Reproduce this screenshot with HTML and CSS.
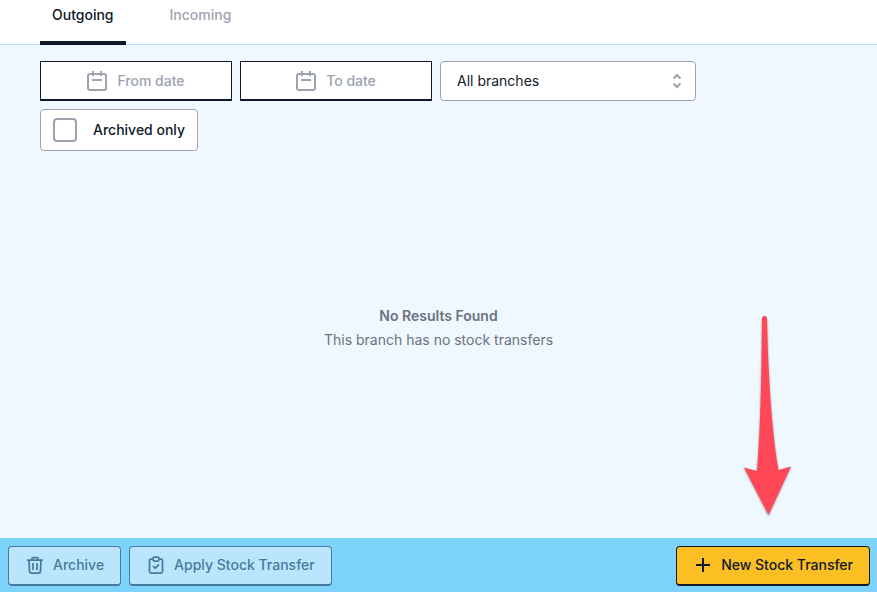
FILE: index.html
```
<!doctype html>
<html lang="en">
<head>
    <meta charset="UTF-8">
    <meta name="viewport" content="width=device-width, initial-scale=1.0">
    <title>Stock Transfers</title>
    <link rel="stylesheet" href="styles.css">
</head>
<body>
    <nav class="tabs">
        <a href="#" class="tab active">Outgoing</a>
        <a href="#" class="tab">Incoming</a>
    </nav>
    <main class="content">
        <form class="filters">
            <button type="button" class="date">
                <svg width="20" height="20" viewBox="0 0 20 20">
                    <rect x="1" y="3" width="18" height="16" rx="2"/>
                    <path d="M6 0v5M14 0v5M5 9h10"/>
                </svg>
                From date
            </button>
            <button type="button" class="date">
                <svg width="20" height="20" viewBox="0 0 20 20">
                    <rect x="1" y="3" width="18" height="16" rx="2"/>
                    <path d="M6 0v5M14 0v5M5 9h10"/>
                </svg>
                To date
            </button>
            <div class="branch">
                <select aria-label="Branch">
                    <option>All branches</option>
                </select>
                <svg width="10" height="16" viewBox="0 0 10 16">
                    <path d="M1.500 5.500L5 2l3.500 3.500M1.500 10.500L5 14l3.500-3.500"/>
                </svg>
            </div>
            <label class="archived">
                <input type="checkbox">
                Archived only
            </label>
        </form>
        <div class="empty">
            <h2>No Results Found</h2>
            <p>This branch has no stock transfers</p>
        </div>
    </main>
    <footer class="actions">
        <button type="button" class="btn" disabled>
            <svg width="20" height="20" viewBox="0 0 20 20">
                <path d="M2 5h16M7 5V3.500a1 1 0 0 1 1-1h4a1 1 0 0 1 1 1V5M4 5l.5 11a2 2 0 0 0 2 2h7a2 2 0 0 0 2-2L16 5M8 8v7M12 8v7"/>
            </svg>
            Archive
        </button>
        <button type="button" class="btn" disabled>
            <svg width="20" height="20" viewBox="0 0 20 20">
                <path d="M7 4H5a1.500 1.500 0 0 0-1.500 1.500v11A1.500 1.500 0 0 0 5 18h10a1.500 1.500 0 0 0 1.500-1.500v-11A1.500 1.500 0 0 0 15 4h-2"/>
                <rect x="7" y="2" width="6" height="4" rx="1.500"/>
                <path d="M7 11l2.200 2.200L13 9.500"/>
            </svg>
            Apply Stock Transfer
        </button>
        <button type="button" class="btn primary">
            <svg width="20" height="20" viewBox="0 0 20 20">
                <path d="M10 3v14M3 10h14"/>
            </svg>
            New Stock Transfer
        </button>
    </footer>
    <!-- arrow pointing at the new transfer button -->
    <svg class="arrow" width="56" height="208" viewBox="0 0 56 208">
        <path d="M22 6Q24.500 1.500 27 6C28 55 31 115 38.500 158L51 154.500 28.500 203 4 155.500 17 159C21 110 21.500 55 22 6Z"/>
    </svg>
</body>
</html>
```

FILE: styles.css
```
*{
    box-sizing: border-box;
    margin: 0;
    padding: 0;
}
body{
    display: flex;
    flex-direction: column;
    position: relative;
    min-height: 100vh;
    background: #f0f8ff;
    color: #111827;
    font: 14px/24px Inter, "Liberation Sans", sans-serif;
}
button, select{
    font: inherit;
    color: inherit;
}
svg{
    flex: none;
    fill: none;
    stroke: currentColor;
    stroke-width: 2;
}

/* tabs */
.tabs{
    display: flex;
    gap: 32px;
    padding: 0 40px;
    background: #ffffff;
    border-bottom: 1px solid #bfdbfe;
}
.tab{
    margin-bottom: -1px;
    padding: 3px 12px 14px;
    border-bottom: 4px solid transparent;
    color: #9ca3af;
    font-weight: 500;
    text-decoration: none;
}
.tab.active{
    border-color: #111827;
    color: #111827;
}

/* filters */
.content{
    flex: 1;
    display: flex;
    flex-direction: column;
}
.filters{
    display: flex;
    flex-wrap: wrap;
    gap: 8px;
    padding: 16px 40px;
}
.date{
    display: flex;
    align-items: center;
    justify-content: center;
    gap: 10px;
    width: 192px;
    height: 40px;
    background: #ffffff;
    border: 1px solid #111827;
    border-bottom-width: 2px;
    color: #9ca3af;
    font-weight: 500;
}
.branch{
    position: relative;
    width: 256px;
}
.branch select{
    appearance: none;
    width: 100%;
    height: 40px;
    padding: 0 16px;
    background: #ffffff;
    border: 1px solid #9ca3af;
    border-radius: 4px;
}
.branch svg{
    position: absolute;
    top: 12px;
    right: 14px;
    color: #9ca3af;
    pointer-events: none;
}
.archived{
    display: flex;
    align-items: center;
    gap: 16px;
    height: 42px;
    padding: 0 12px;
    background: #ffffff;
    border: 1px solid #9ca3af;
    border-radius: 4px;
    font-weight: 500;
}
.archived input{
    appearance: none;
    width: 24px;
    height: 24px;
    border: 2px solid #9ca3af;
    border-radius: 4px;
}

.empty{
    flex: 1;
    display: flex;
    flex-direction: column;
    justify-content: center;
    padding-bottom: 50px;
    color: #6b7280;
    text-align: center;
}
.empty h2{
    font-size: 14px;
    font-weight: 600;
}

/* bottom bar */
.actions{
    display: flex;
    gap: 8px;
    padding: 8px 7px 6px 8px;
    background: #7dd3fc;
}
.btn{
    display: flex;
    align-items: center;
    gap: 8px;
    height: 40px;
    padding: 0 16px 2px;
    background: #bae6fd;
    border: 1px solid #487a9b;
    border-bottom-width: 2px;
    border-radius: 4px;
    color: #487a9b;
    font-weight: 500;
}
.btn svg{
    stroke-width: 1.75;
}
.primary{
    margin-left: auto;
    background: #fbbf24;
    border-color: #111827;
    color: #111827;
}
.primary svg{
    stroke-width: 2;
}

.arrow{
    position: absolute;
    right: 81px;
    bottom: 72px;
    fill: #ff4757;
    stroke: none;
    filter: drop-shadow(0 1px 1px rgba(0, 0, 0, .4));
    pointer-events: none;
}
```
